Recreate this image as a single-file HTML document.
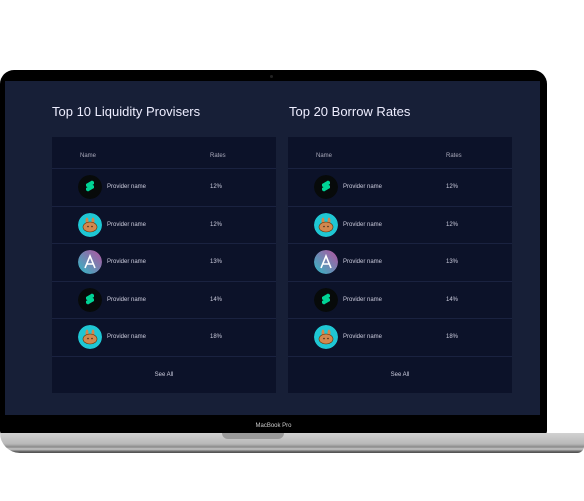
<!DOCTYPE html>
<html><head><style>
*{margin:0;padding:0;box-sizing:border-box}
body{width:584px;height:501px;background:#fff;position:relative;overflow:hidden;font-family:"Liberation Sans",sans-serif}
.lid{position:absolute;left:0;top:70px;width:547px;height:365px;background:#000;border-radius:14px 14px 4px 4px}
.screen{position:absolute;left:5px;top:81px;width:535px;height:334px;background:#171f37}
.base{position:absolute;left:0;top:433px;width:584px;height:20px;background:linear-gradient(#d2d2d2,#b8b8b8 55%,#8a8a8a 70%,#c8c8c8 80%,#555 95%);border-radius:0 0 10px 30px}
.notch{position:absolute;left:222px;top:433px;width:62px;height:6px;background:#9a9a9a;border-radius:0 0 6px 6px}
.mbp{position:absolute;left:0;width:547px;top:423px;text-align:center;color:#ccc;font-size:6px}
.title{position:absolute;top:104px;color:#eef;font-size:13px}
.card{position:absolute;top:137px;width:224px;height:256px;background:#0c1229}
.hdr{height:31px;position:relative;color:#aab;font-size:6px}
.row{height:37.6px;border-top:1px solid #1a2240;position:relative;color:#ccd;font-size:6px}
.ic{position:absolute;left:26px;top:6px;width:24px;height:24px;border-radius:50%}
.nm{position:absolute;left:55px;top:15px}
.rt{position:absolute;left:158px;top:15px}
.see{height:37px;border-top:1px solid #1a2240;text-align:center;line-height:37px;color:#ccd;font-size:6px}
</style></head><body>
<div class="lid"></div>
<div class="screen"></div>
<div style="position:absolute;left:270px;top:75px;width:3px;height:3px;border-radius:50%;background:#222"></div>
<div class="base"></div><div class="notch"></div>
<div class="mbp">MacBook Pro</div>
<div class="title" style="left:52px">Top 10 Liquidity Provisers</div>
<div class="title" style="left:289px">Top 20 Borrow Rates</div>
<div class="card" style="left:52px" id="c1"></div>
<div class="card" style="left:288px" id="c2"></div>
<script>
var comp='<svg class="ic" viewBox="0 0 24 24"><circle cx="12" cy="12" r="12" fill="#070a0a"/><path d="M8 9l6-3.5 2 1.2v2.3l-6 3.5-2-1.2z M8 13l6-3.5 2 1.2v2.3l-6 3.5-2-1.2z" fill="#00d395"/></svg>';
var cake='<svg class="ic" viewBox="0 0 24 24"><circle cx="12" cy="12" r="12" fill="#1fc7d4"/><ellipse cx="9" cy="8" rx="1.5" ry="3.5" fill="#d1884f"/><ellipse cx="15" cy="8" rx="1.5" ry="3.5" fill="#d1884f"/><ellipse cx="12" cy="14" rx="7" ry="5" fill="#d1884f" stroke="#633001" stroke-width=".6"/><circle cx="10" cy="13.5" r=".8" fill="#452a19"/><circle cx="14" cy="13.5" r=".8" fill="#452a19"/></svg>';
var aave='<svg class="ic" viewBox="0 0 24 24"><defs><linearGradient id="g" x1="0" y1="1" x2="1" y2="0"><stop offset="0" stop-color="#2ebac6"/><stop offset="1" stop-color="#b6509e"/></linearGradient></defs><circle cx="12" cy="12" r="12" fill="url(#g)"/><path d="M7 18L12 6l5 12M8.5 14h7" stroke="#fff" stroke-width="1.6" fill="none"/></svg>';
var icons=[comp,cake,aave,comp,cake],rates=['12%','12%','13%','14%','18%'];
var h='<div class="hdr"><span style="position:absolute;left:28px;top:16px">Name</span><span style="position:absolute;left:158px;top:16px">Rates</span></div>';
for(var i=0;i<5;i++)h+='<div class="row">'+icons[i]+'<span class="nm">Provider name</span><span class="rt">'+rates[i]+'</span></div>';
h+='<div class="see">See All</div>';
document.getElementById('c1').innerHTML=h;
document.getElementById('c2').innerHTML=h.replace('id="g"','id="g2"').replace('url(#g)','url(#g2)');
</script>
</body></html>
